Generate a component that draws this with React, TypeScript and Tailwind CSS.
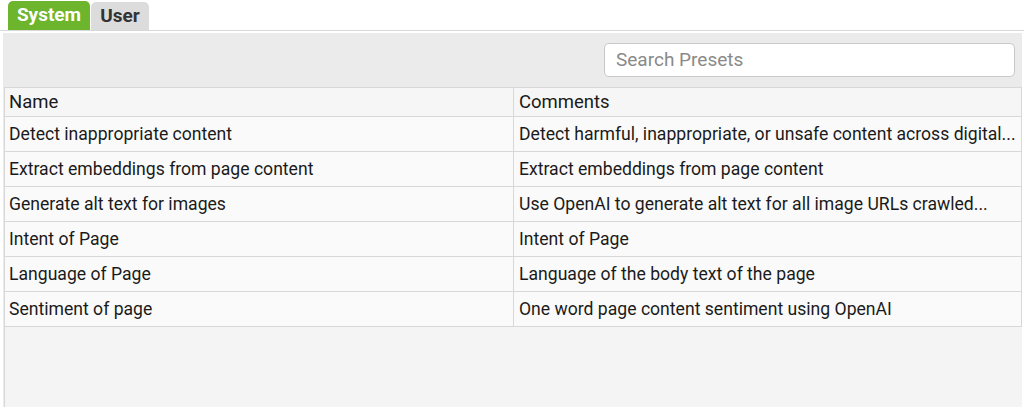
import React from "react";

const rows = [
  ["Detect inappropriate content", "Detect harmful, inappropriate, or unsafe content across digital..."],
  ["Extract embeddings from page content", "Extract embeddings from page content"],
  ["Generate alt text for images", "Use OpenAI to generate alt text for all image URLs crawled..."],
  ["Intent of Page", "Intent of Page"],
  ["Language of Page", "Language of the body text of the page"],
  ["Sentiment of page", "One word page content sentiment using OpenAI"],
];

export default function App() {
  return (
    <div className="w-[1024px] h-[407px] bg-white overflow-hidden flex flex-col" style={{ fontFamily: "Roboto, 'Liberation Sans', sans-serif" }}>
      <div className="flex items-end pl-[8px] h-[30px] gap-[1px]">
        <div className="h-[29px] w-[82px] bg-[#6cb52d] rounded-t-[5px] flex items-center justify-center text-white font-bold text-[19px]">System</div>
        <div className="h-[28px] w-[58px] bg-[#dcdcdc] rounded-t-[5px] flex items-center justify-center text-[#333] font-bold text-[19px]">User</div>
      </div>
      <div className="h-[3px] border-t border-[#d8d8d8] bg-white" />
      <div className="flex-1 ml-[3px] mr-[2px] bg-[#ebebeb] flex flex-col">
        <div className="flex justify-end pt-[10px] pr-[7px] pb-[10px]">
          <div className="w-[411px] h-[34px] bg-white border border-[#c8c8c8] rounded-[5px] flex items-center pl-[11px] text-[19px] text-[#8a8a8a]">Search Presets</div>
        </div>
        <div className="flex-1 ml-[1px] bg-[#f4f4f4] border-l border-[#d8d8d8] flex flex-col">
          <div className="border-y border-r border-[#d8d8d8] bg-[#f6f6f6]">
            <div className="grid grid-cols-[509px_1fr] h-[28px] text-[18.5px] text-[#1a1a1a]">
              <div className="flex items-center pl-[4px] pt-[1px] border-r border-[#d8d8d8]">Name</div>
              <div className="flex items-center pl-[5px] pt-[1px]">Comments</div>
            </div>
          </div>
          {rows.map(([a, b]) => (
            <div key={a} className="grid grid-cols-[509px_1fr] h-[35px] text-[17.6px] text-[#1a1a1a] bg-[#fafafa] border-b border-r border-[#d8d8d8]">
              <div className="flex items-center pl-[4px] pt-[1px] border-r border-[#d8d8d8] overflow-hidden whitespace-nowrap">{a}</div>
              <div className="flex items-center pl-[5px] pt-[1px] overflow-hidden whitespace-nowrap">{b}</div>
            </div>
          ))}
        </div>
      </div>
    </div>
  );
}
